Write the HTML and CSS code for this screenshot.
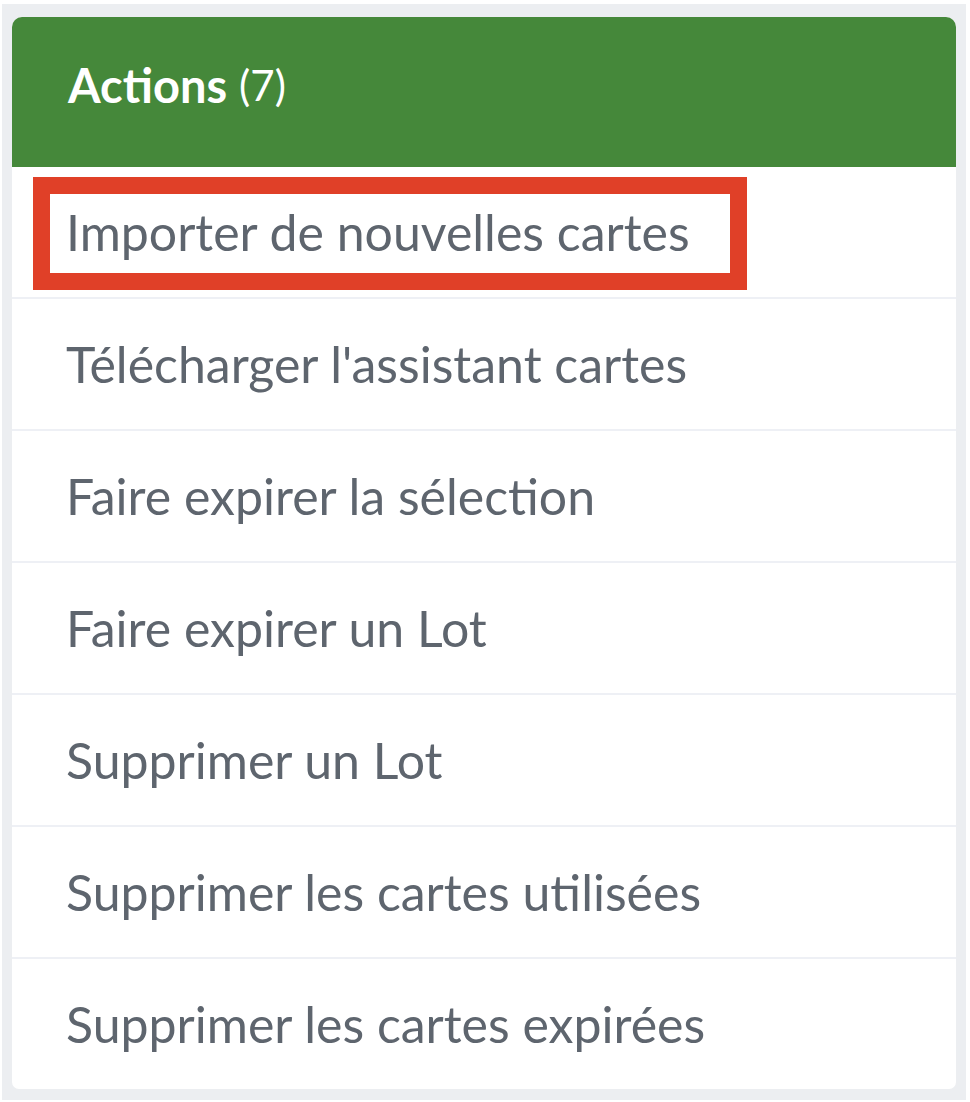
FILE: index.html
```html
<!DOCTYPE html>
<html lang="fr">
<head>
<meta charset="utf-8">
<title>Actions</title>
<link rel="stylesheet" href="styles.css">
</head>
<body>
<div class="frame">
  <div class="card">
    <div class="card-header">Actions <span class="count">(7)</span></div>
    <ul class="list">
      <li class="item item-highlight">Importer de nouvelles cartes<span class="mark"></span></li>
      <li class="item">Télécharger l'assistant cartes</li>
      <li class="item">Faire expirer la sélection</li>
      <li class="item">Faire expirer un Lot</li>
      <li class="item">Supprimer un Lot</li>
      <li class="item">Supprimer les cartes utilisées</li>
      <li class="item">Supprimer les cartes expirées</li>
    </ul>
  </div>
</div>
</body>
</html>
```
FILE: styles.css
```css
html, body {
  margin: 0;
  padding: 0;
  background: #ffffff;
}
body {
  font-family: "Lato", "Liberation Sans", sans-serif;
}
.frame {
  margin: 4px 4px 2px 2px;
  padding: 13px 10px 11px 10px;
  background: #eceef1;
}
.card {
  background: #ffffff;
  border-radius: 10px 10px 7px 7px;
  overflow: hidden;
}
.card-header {
  height: 150px;
  box-sizing: border-box;
  background: #45883a;
  color: #ffffff;
  display: flex;
  align-items: center;
  padding-left: 56px;
  padding-bottom: 14px;
  font-size: 47px;
  font-weight: 700;
}
.count {
  font-size: 42px;
  font-weight: 400;
  margin-left: 12px;
}
.list {
  list-style: none;
  margin: 0;
  padding: 0;
}
.item {
  position: relative;
  height: 130px;
  display: flex;
  align-items: center;
  padding-left: 54px;
  font-size: 50px;
  color: #5e656e;
}
.item + .item {
  border-top: 2px solid #eef0f5;
}
.mark {
  position: absolute;
  left: 21px;
  top: 10px;
  width: 714px;
  height: 113px;
  box-sizing: border-box;
  border: 17px solid #e04028;
}
```
